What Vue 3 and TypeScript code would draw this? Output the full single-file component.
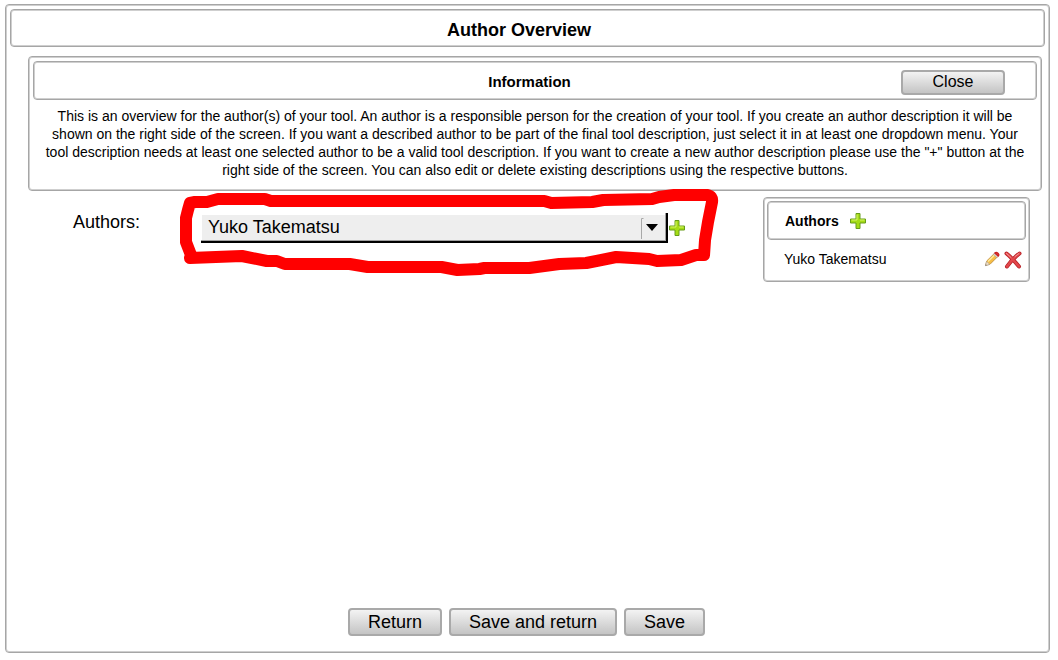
<script setup lang="ts">
import { ref } from 'vue'

const authors = ref<string[]>(['Yuko Takematsu'])
const selected = ref<string>('Yuko Takematsu')
const showInfo = ref<boolean>(true)
const plusShape = 'M6 .5h4v5.500h5.500v4h-5.500v5.500h-4v-5.500h-5.500v-4h5.500z'
</script>

<template>
  <main class="frame">
    <header class="box title-bar">
      <h1>Author Overview</h1>
    </header>

    <section v-if="showInfo" class="box info">
      <div class="box info-head">
        <h2>Information</h2>
        <button class="btn close" type="button" @click="showInfo = false">Close</button>
      </div>
      <p>
        This is an overview for the author(s) of your tool. An author is a responsible person for the creation of your
        tool. If you create an author description it will be shown on the right side of the screen. If you want a
        described author to be part of the final tool description, just select it in at least one dropdown menu. Your
        tool description needs at least one selected author to be a valid tool description. If you want to create a new
        author description please use the "+" button at the right side of the screen. You can also edit or delete
        existing descriptions using the respective buttons.
      </p>
    </section>

    <div class="content">
      <label class="field-label" for="author">Authors:</label>
      <div class="picker">
        <div class="combo">
          <select id="author" v-model="selected">
            <option v-for="name in authors" :key="name">{{ name }}</option>
          </select>
          <svg class="arrow" viewBox="0 0 26 24" aria-hidden="true">
            <path d="M1.500 23V2.500h2" fill="none" stroke="#a8a8a8" />
            <path d="M6 8h12l-6 7z" fill="#000" />
          </svg>
        </div>
        <button class="icon" type="button" aria-label="Add author field">
          <svg viewBox="0 0 16 16"><path class="plus" :d="plusShape" /><path class="shine" d="M7 1.500v5.500h-5.500M10 7h4.500" /></svg>
        </button>
        <svg class="marker" viewBox="180 188 540 90" preserveAspectRatio="none" aria-hidden="true">
          <path
            d="M190 203L195 202L207 202L218 199L265 199L271 201L545 201L552 203L593 202L604 200L653 199L660 197L675 195L708 195Q714 196 713 202L709 222L706 240L705 255L697 255L682 260L658 261L650 259L617 257L587 263L560 264L530 268L485 268L480 269L458 270L442 267L368 267L350 264L285 264L277 261L267 261L242 256L190 258L191 255L186 242V218L188 210Z"
          />
        </svg>
      </div>

      <aside class="box panel">
        <div class="box panel-head">
          <h2>Authors</h2>
          <button class="icon" type="button" aria-label="Add author">
            <svg viewBox="0 0 16 16"><path class="plus" :d="plusShape" /><path class="shine" d="M7 1.500v5.500h-5.500M10 7h4.500" /></svg>
          </button>
        </div>
        <ul>
          <li v-for="name in authors" :key="name">
            <span>{{ name }}</span>
            <button class="icon" type="button" :aria-label="'Edit ' + name">
              <svg viewBox="0 0 16 16">
                <path d="M1.500 14.500l1.200-4.500L10 2.800l3.300 3.200L6 13.300z" fill="#f6bd45" stroke="#b98434" stroke-width=".8" />
                <path d="M4 10.500l7-7" stroke="#ffe99a" stroke-width="1.500" />
                <path d="M9.500 3.300l1.300-1.300 3.300 3.200-1.300 1.300z" fill="#ddd" stroke="#999" stroke-width=".5" />
                <path d="M10.800 2Q12.300.8 14 2.200T14.200 5.200z" fill="#e33a3a" stroke="#c92020" stroke-width="1.200" />
                <path d="M2.600 10.500l3 2.800-4.100 1.400z" fill="#f4dfc2" stroke="#aaa" stroke-width=".6" />
                <path d="M1.300 14.800l.5-1.600 1.200 1z" fill="#777" />
              </svg>
            </button>
            <button class="icon delete" type="button" :aria-label="'Delete ' + name">
              <svg viewBox="0 0 18 18">
                <path d="M2.500 2.500Q7 6 15 15.500M15.500 2.500Q8 8 3 15.500" fill="none" stroke="#b51f25" stroke-width="4" stroke-linecap="round" />
                <path d="M2.500 2.500Q7 6 15 15.500M15.500 2.500Q8 8 3 15.500" fill="none" stroke="#e2474b" stroke-width="2.400" stroke-linecap="round" />
                <path d="M2.500 2.500L7 6.500M15 2.500L11 5.500" fill="none" stroke="#f59a98" stroke-linecap="round" />
              </svg>
            </button>
          </li>
        </ul>
      </aside>
    </div>

    <footer>
      <button class="btn" type="button">Return</button>
      <button class="btn" type="button">Save and return</button>
      <button class="btn" type="button">Save</button>
    </footer>
  </main>
</template>

<style>
body {
  background: #fff;
}
</style>

<style scoped>
* {
  box-sizing: border-box;
}

.frame,
.box {
  border: 1px solid #a6a6a6;
  border-radius: 4px;
  box-shadow: inset 0 0 0 1px #cfcfcf;
}

.frame {
  display: flex;
  flex-direction: column;
  min-height: calc(100vh - 11px);
  margin: 4px 8px 7px 5px;
  padding: 4px;
  color: #000;
  font-family: "Liberation Sans", Arial, sans-serif;
  font-size: 14px;
}

h1,
h2,
p,
ul {
  margin: 0;
  padding: 0;
}

.title-bar {
  display: flex;
  align-items: center;
  justify-content: center;
  min-height: 38px;
  padding-right: 17px;
}

h1 {
  font-size: 18px;
  line-height: 22px;
  padding-top: 4px;
}

.info {
  margin: 9px 3px 0 18px;
  padding: 4px;
}

.info-head {
  display: grid;
  grid-template-columns: 1fr auto 1fr;
  align-items: center;
  min-height: 39px;
  padding: 0 31px 0 20px;
}

.info-head h2 {
  grid-column: 2;
  padding-top: 2px;
  font-size: 15px;
}

.info p {
  padding: 7px 9px;
  line-height: 18px;
  text-align: center;
}

.btn {
  height: 28px;
  padding: 0 18px;
  border: 2px solid #a9a9a9;
  border-radius: 4px;
  background: linear-gradient(#f3f3f3, #c4c4c4);
  color: #000;
  font-family: inherit;
  font-size: 18px;
  line-height: 22px;
}

.btn.close {
  justify-self: end;
  width: 104px;
  height: 25px;
  margin-top: 3px;
  font-size: 16px;
  line-height: 20px;
}

.content {
  display: flex;
  align-items: flex-start;
  padding: 6px 15px 0 63px;
}

.field-label {
  width: 128px;
  padding-top: 14px;
  font-size: 18px;
  line-height: 22px;
}

.picker {
  position: relative;
  display: flex;
  flex: 1;
  align-items: center;
  margin-top: 16px;
  margin-right: 77px;
}

.combo {
  position: relative;
  flex: 1;
}

select {
  display: block;
  width: 100%;
  height: 30px;
  padding: 0 30px 0 7px;
  appearance: none;
  border: solid #000;
  border-width: 0 2px 2px 0;
  border-radius: 0;
  background: #eee;
  box-shadow: inset -1px -1px #a0a0a0, inset 1px 2px #fff;
  color: #000;
  font-family: inherit;
  font-size: 18px;
}

.arrow {
  position: absolute;
  top: 3px;
  right: 2px;
  width: 26px;
  height: 24px;
  pointer-events: none;
}

.icon {
  display: block;
  width: 18px;
  height: 18px;
  padding: 1px;
  border: 0;
  background: none;
}

.icon svg {
  display: block;
  width: 16px;
  height: 16px;
}

.plus {
  fill: #a5dc16;
  stroke: #669c18;
  stroke-linejoin: round;
}

.shine {
  fill: none;
  stroke: #d5f36b;
}

.marker {
  position: absolute;
  top: -25px;
  left: -21px;
  width: calc(100% + 54px);
  height: 90px;
  pointer-events: none;
}

.marker path {
  fill: none;
  stroke: #f00;
  stroke-width: 12px;
  stroke-linecap: round;
  stroke-linejoin: round;
  vector-effect: non-scaling-stroke;
}

.panel {
  width: 267px;
  padding: 3px;
}

.panel-head {
  display: flex;
  align-items: center;
  gap: 10px;
  min-height: 39px;
  padding: 0 17px;
}

.panel-head h2 {
  font-size: 14px;
}

ul {
  list-style: none;
}

li {
  display: flex;
  align-items: center;
  min-height: 38px;
  padding: 0 3px 0 17px;
}

li span {
  flex: 1;
}

.delete {
  width: 20px;
  margin-left: 2px;
}

.delete svg {
  width: 18px;
  height: 18px;
}

footer {
  display: flex;
  justify-content: center;
  gap: 7px;
  margin-top: auto;
  padding: 16px 2px 12px 0;
}
</style>
